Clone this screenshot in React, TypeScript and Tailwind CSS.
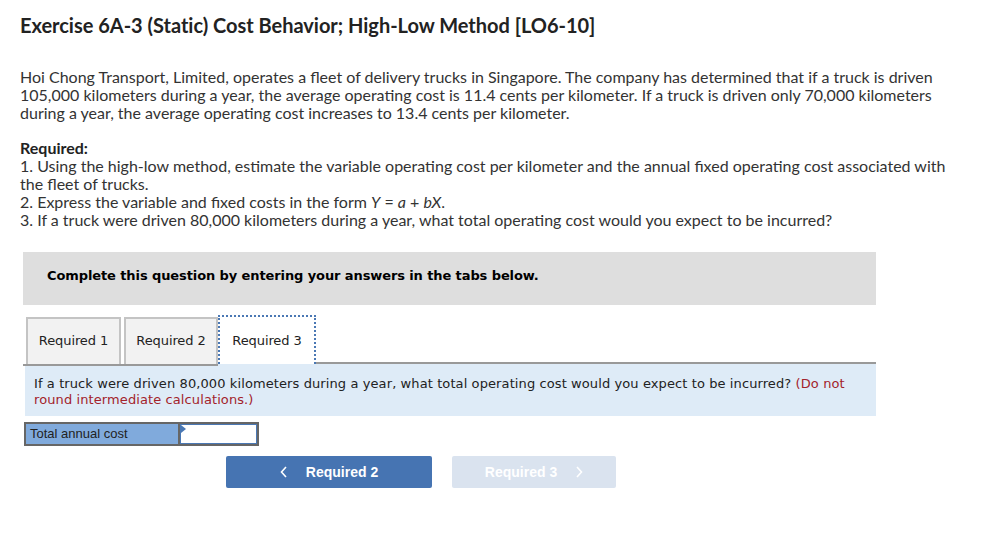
import React from 'react';

const verdana = "font-['Verdana','DejaVu_Sans',sans-serif]";

const App = () => {
  return (
    <div className="w-[986px] h-[540px] bg-white text-[#333] font-['Lato','Liberation_Sans',sans-serif]">
      <div className="px-5 pt-[13px]">
        <h1 className="text-[20px] font-bold text-[#222] leading-6 tracking-[-0.02px]">
          Exercise 6A-3 (Static) Cost Behavior; High-Low Method [LO6-10]
        </h1>

        <p className="mt-[31px] text-[16px] leading-[18px] w-[925px]">
          Hoi Chong Transport, Limited, operates a fleet of delivery trucks in Singapore. The company has determined that if a truck is driven 105,000 kilometers during a year, the average operating cost is 11.4 cents per kilometer. If a truck is driven only 70,000 kilometers during a year, the average operating cost increases to 13.4 cents per kilometer.
        </p>

        <div className="mt-[17px] text-[16px] leading-[18px] w-[935px]">
          <p className="font-bold text-[#222]">Required:</p>
          <p>
            1. Using the high-low method, estimate the variable operating cost per kilometer and the annual fixed operating cost associated with the fleet of trucks.
          </p>
          <p>
            2. Express the variable and fixed costs in the form <i>Y</i> = <i>a</i> + <i>bX</i>.
          </p>
          <p>3. If a truck were driven 80,000 kilometers during a year, what total operating cost would you expect to be incurred?</p>
        </div>
      </div>

      <div className="ml-[23px] w-[853px]">
        <div className={`mt-[23px] h-[53px] bg-[#dedede] pl-6 pt-[14px] ${verdana}`}>
          <p className="text-[13px] font-bold text-black tracking-[-0.1px]">Complete this question by entering your answers in the tabs below.</p>
        </div>

        <div className={`mt-[10px] flex items-end ${verdana} text-[13px] text-[#222]`}>
          <div className="ml-[3px] w-[95px] h-[47px] border-2 border-b-0 border-[#c4c4c4] bg-[#f2f2f2] flex items-center justify-center pb-[1px] tracking-[-0.1px]">
            Required 1
          </div>
          <div className="ml-[3px] w-[94px] h-[47px] border-2 border-b-0 border-[#c4c4c4] bg-[#f2f2f2] flex items-center justify-center pb-[1px] tracking-[-0.1px]">
            Required 2
          </div>
          <div className="w-[98px] h-[49px] border-2 border-dotted border-b-0 border-[#4a78b4] bg-white flex items-center justify-center tracking-[-0.1px]">
            Required 3
          </div>
          <div className="flex-1 border-b-2 border-[#999]" />
        </div>
        <div className="flex">
          <div className="w-[195px] border-t-2 border-[#999]" />
        </div>

        <div className={`-mt-[2px] ml-[2px] bg-[#deebf7] pl-[9px] pr-3 pt-[12px] pb-[8px] ${verdana} text-[13px] leading-4 text-[#222] tracking-[0.1px]`}>
          If a truck were driven 80,000 kilometers during a year, what total operating cost would you expect to be incurred?{' '}
          <span className="text-[#a3232b]">(Do not round intermediate calculations.)</span>
        </div>

        <div className="mt-[6px] ml-[1px] flex w-[235px] h-[24px] border-2 border-[#666] font-['Liberation_Sans',Arial,sans-serif] text-[13px] text-[#222]">
          <div className="w-[154px] bg-[#80aadc] flex items-center pl-1 border-r-2 border-[#666]">Total annual cost</div>
          <div className="relative flex-1 bg-white border border-[#4a78b4]">
            <span className="absolute left-0 top-0 w-0 h-0 border-t-[4px] border-b-[4px] border-l-[5px] border-t-transparent border-b-transparent border-l-[#4a78b4]" />
          </div>
        </div>

        <div className="mt-[10px] flex gap-5 ml-[203px] font-['Liberation_Sans',Arial,sans-serif] text-[14px] font-bold text-white">
          <button className="w-[206px] h-[32px] rounded-[2px] bg-[#4674b2] flex items-center justify-center gap-[18px]">
            <svg width="8" height="12" viewBox="0 0 8 12" fill="none" stroke="white" strokeWidth="1.6">
              <path d="M6 1 1.5 6 6 11" />
            </svg>
            <span>Required 2</span>
          </button>
          <button className="w-[164px] h-[32px] rounded-[2px] bg-[#dae3ef] flex items-center justify-center gap-[18px]">
            <span>Required 3</span>
            <svg width="8" height="12" viewBox="0 0 8 12" fill="none" stroke="white" strokeWidth="1.6">
              <path d="M2 1 6.5 6 2 11" />
            </svg>
          </button>
        </div>
      </div>
    </div>
  );
};

export default App;
